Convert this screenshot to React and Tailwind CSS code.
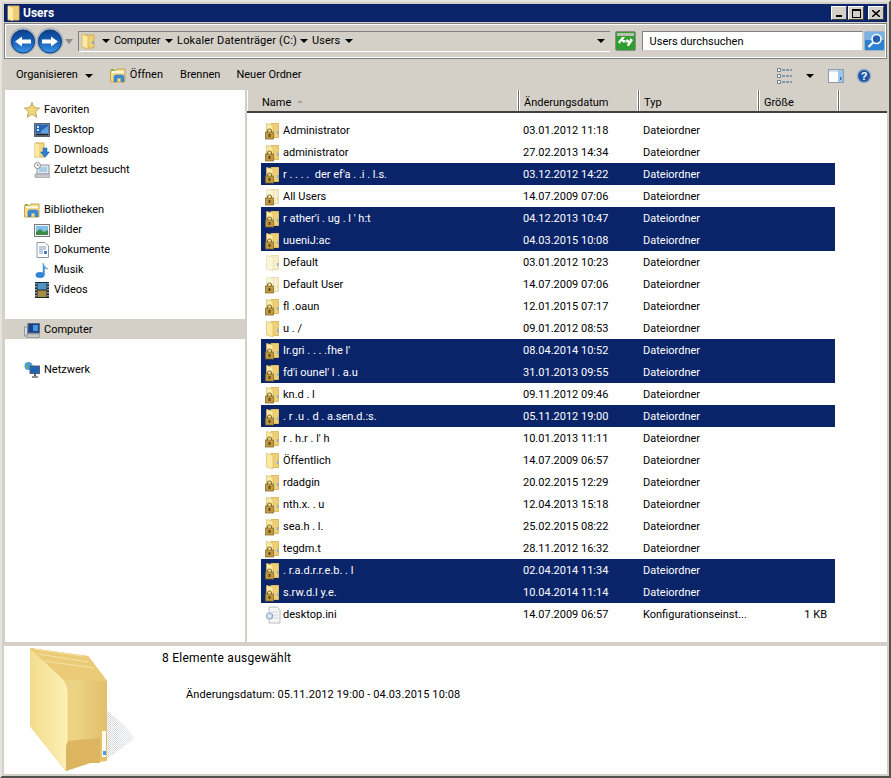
import React from "react";

const rows = [
  { name: "Administrator", date: "03.01.2012 11:18" },
  { name: "administrator", date: "27.02.2013 14:34" },
  { name: "r . . . .  der ef'a . .i . l.s.", date: "03.12.2012 14:22", sel: true },
  { name: "All Users", date: "14.07.2009 07:06", pale: true },
  { name: "r ather'i . ug . l ' h:t", date: "04.12.2013 10:47", sel: true },
  { name: "uueniJ:ac", date: "04.03.2015 10:08", sel: true },
  { name: "Default", date: "03.01.2012 10:23", pale: true, open: true },
  { name: "Default User", date: "14.07.2009 07:06", pale: true },
  { name: "fl .oaun", date: "12.01.2015 07:17" },
  { name: "u . /", date: "09.01.2012 08:53", open: true },
  { name: "Ir.gri . . . .fhe l'", date: "08.04.2014 10:52", sel: true },
  { name: "fd'i ounel' l . a.u", date: "31.01.2013 09:55", sel: true },
  { name: "kn.d . l", date: "09.11.2012 09:46" },
  { name: ". r .u . d . a.sen.d.:s.", date: "05.11.2012 19:00", sel: true },
  { name: "r . h.r . l' h", date: "10.01.2013 11:11" },
  { name: "Öffentlich", date: "14.07.2009 06:57", open: true },
  { name: "rdadgin", date: "20.02.2015 12:29" },
  { name: "nth.x. . u", date: "12.04.2013 15:18" },
  { name: "sea.h . l.", date: "25.02.2015 08:22" },
  { name: "tegdm.t", date: "28.11.2012 16:32" },
  { name: ". r.a.d.r.r.e.b. . l", date: "02.04.2014 11:34", sel: true },
  { name: "s.rw.d.l y.e.", date: "10.04.2014 11:14", sel: true },
];

const Folder = ({ lock, pale, open }) => (
  <svg width="18" height="18" viewBox="0 0 18 18" className="shrink-0">
    <path d="M6 1.5 H13.5 V15.5 H6 Z" fill={pale ? "#f5eec8" : "#efcf76"} stroke={pale ? "#e6dcae" : "#dcbb64"} />
    <path d="M1.5 1.5 L8 3 V17 L1.5 15 Z" fill={pale ? "#fbf6d8" : "#fbe9a4"} stroke={pale ? "#e8dfb4" : "#dcbb64"} strokeWidth="0.7" />
    <rect x="12" y="9" width="1.5" height="3" fill={open || !pale ? "#7fb3dc" : "#e6dcae"} />
    {lock && (
      <g>
        <path d="M2.5 10 V9 a2 2 0 0 1 4 0 V10" fill="none" stroke="#8a6d2a" strokeWidth="1.2" />
        <rect x="0.5" y="10" width="8" height="7" fill="#c09a42" stroke="#7d6326" strokeWidth="0.7" />
        <rect x="3.5" y="12" width="2" height="3" fill="#5e4b1f" />
      </g>
    )}
  </svg>
);

const IniIcon = () => (
  <svg width="18" height="18" viewBox="0 0 18 18" className="shrink-0">
    <path d="M4 1 H12 L15 4 V17 H4 Z" fill="#f4f6f8" stroke="#b8bec4" />
    <path d="M6 6 H13 M6 9 H13 M6 12 H13" stroke="#cfd6dc" />
    <circle cx="4.5" cy="10" r="3" fill="#dce6f0" stroke="#8fa9c8" strokeWidth="1.2" />
  </svg>
);

const FolderSmall = () => (
  <svg width="16" height="18" viewBox="0 0 16 18">
    <path d="M4 3 H14 V16 H4 Z" fill="#f0cf75" stroke="#cfa94f" />
    <path d="M2 2 L8 4 V17 L2 15 Z" fill="#fbe9a4" stroke="#d7b45c" strokeWidth="0.8" />
    <rect x="12" y="9" width="1.5" height="3" fill="#6ea8d8" />
  </svg>
);

const LibraryIcon = () => (
  <svg width="16" height="15" viewBox="0 0 16 15">
    <path d="M0.5 2.5 H6 L7 1 H15 V14 H0.5 Z" fill="#f5db8c" stroke="#c8a54e" />
    <rect x="2" y="3" width="12" height="2" fill="#fff8dc" />
    <rect x="1" y="1" width="3" height="1.2" fill="#5fb648" />
    <path d="M4 13.5 V9 Q4 7 6 7 H12 Q14 7 14 9 V13.5 H11 V10 H7 V13.5 Z" fill="#3f8fd6" stroke="#1f6bb0" strokeWidth="0.6" />
  </svg>
);

const Star = () => (
  <svg width="16" height="16" viewBox="0 0 16 16">
    <path d="M8 0.5 L10.2 5.6 L15.6 6.1 L11.5 9.7 L12.8 15.2 L8 12.3 L3.2 15.2 L4.5 9.7 L0.4 6.1 L5.8 5.6 Z" fill="#f2d679" stroke="#b39543" strokeWidth="0.8" />
  </svg>
);

const DesktopIcon = () => (
  <svg width="16" height="14" viewBox="0 0 16 14">
    <rect x="0.5" y="0.5" width="15" height="13" fill="#8a98a8" stroke="#56616e" />
    <rect x="1.5" y="1.5" width="13" height="9" fill="#2a63b4" />
    <path d="M3 3 h2 v2 h-2 Z M3 6 h2 v2 h-2 Z" fill="#cfe4f6" />
    <path d="M7 8 L14 3 V10 H7 Z" fill="#5da0e0" />
    <rect x="1.5" y="11" width="13" height="1.5" fill="#222" />
  </svg>
);

const DownloadsIcon = () => (
  <svg width="16" height="16" viewBox="0 0 16 16">
    <path d="M1 1 H10 V15 H1 Z" fill="#f3d67e" stroke="#d0ad55" />
    <path d="M1 1 L5 3 V15.5 L1 14 Z" fill="#fbe9a4" />
    <path d="M9 6 H13 V10 H15.5 L11 15.5 L6.5 10 H9 Z" fill="#2f7fd0" stroke="#1e62a8" strokeWidth="0.5" />
  </svg>
);

const RecentIcon = () => (
  <svg width="16" height="16" viewBox="0 0 16 16">
    <rect x="3" y="3" width="12" height="9" fill="#e4e8ec" stroke="#8e969e" />
    <rect x="5" y="5" width="8" height="5" fill="#a8cdea" />
    <rect x="1" y="12" width="15" height="3.5" fill="#c4c8cc" stroke="#8e969e" strokeWidth="0.6" />
    <circle cx="3.5" cy="3.5" r="3" fill="#fff" stroke="#808890" />
    <path d="M3.5 2 V3.5 H5" fill="none" stroke="#555" strokeWidth="0.7" />
  </svg>
);

const PicturesIcon = () => (
  <svg width="16" height="13" viewBox="0 0 16 13">
    <rect x="0.5" y="0.5" width="15" height="12" fill="#f2f2f2" stroke="#74797e" />
    <rect x="2" y="2" width="12" height="9" fill="#7fc0ea" />
    <path d="M2 11 V8 L6 5 L10 8 L14 6 V11 Z" fill="#3d8a4a" />
  </svg>
);

const DocIcon = () => (
  <svg width="13" height="16" viewBox="0 0 13 16">
    <path d="M1 0.5 H9 L12.5 4 V15.5 H1 Z" fill="#fff" stroke="#8d99a8" />
    <path d="M3 5 H10 M3 7 H10 M3 9 H7 M3 11 H7" stroke="#7c9cc0" />
    <rect x="8" y="9" width="3" height="3" fill="#3f7fc0" />
  </svg>
);

const MusicIcon = () => (
  <svg width="14" height="16" viewBox="0 0 14 16">
    <ellipse cx="5" cy="13" rx="4.5" ry="3" fill="#2f86d6" />
    <path d="M8 13 V1 Q9 5 13 7 Q11 7 9.5 6 V13 Z" fill="#4a9be2" stroke="#2a75bc" strokeWidth="0.4" />
  </svg>
);

const VideoIcon = () => (
  <svg width="14" height="16" viewBox="0 0 14 16">
    <rect x="0" y="0" width="14" height="16" fill="#1c2a33" />
    <rect x="2.5" y="1" width="9" height="6.5" fill="#4e94c6" />
    <rect x="2.5" y="8.5" width="9" height="6.5" fill="#a98a46" />
    <path d="M1 1 v1.5 M1 4 v1.5 M1 7 v1.5 M1 10 v1.5 M1 13 v1.5 M13 1 v1.5 M13 4 v1.5 M13 7 v1.5 M13 10 v1.5 M13 13 v1.5" stroke="#fff" />
  </svg>
);

const ComputerIcon = () => (
  <svg width="16" height="15" viewBox="0 0 16 15">
    <rect x="0.5" y="4" width="3" height="9" fill="#d9dcdf" stroke="#7a7f84" strokeWidth="0.7" />
    <rect x="4" y="0.5" width="11.5" height="9.5" fill="#16418e" stroke="#5c6a7c" />
    <path d="M9 2 H14 V8 H9 Z" fill="#4a94dc" />
    <rect x="3" y="11" width="12.5" height="3.5" fill="#c4c8cc" stroke="#7a7f84" strokeWidth="0.6" />
  </svg>
);

const NetworkIcon = () => (
  <svg width="16" height="16" viewBox="0 0 16 16">
    <circle cx="4.5" cy="4" r="4" fill="#4a9fd6" />
    <path d="M2 2 Q4 3 4 5 Q3 7 2 6 Z" fill="#5cb84a" />
    <rect x="6" y="4" width="9.5" height="7.5" fill="#1f62b8" stroke="#56616e" />
    <rect x="10" y="11.5" width="2" height="2.5" fill="#56616e" />
    <path d="M8 15 H14" stroke="#3d4650" strokeWidth="1.2" />
  </svg>
);

const NavButton = ({ flip }) => (
  <svg width="28" height="28" viewBox="0 0 28 28" className="shrink-0">
    <defs>
      <linearGradient id="navBlue" x1="0" y1="0" x2="0" y2="1">
        <stop offset="0" stopColor="#0d3f8e" />
        <stop offset="0.45" stopColor="#125bb4" />
        <stop offset="1" stopColor="#3c97ea" />
      </linearGradient>
    </defs>
    <circle cx="14" cy="14" r="13.5" fill="#a9b1ba" />
    <circle cx="14" cy="14.5" r="11.5" fill="url(#navBlue)" stroke="#0d3a7c" />
    <g transform={flip ? "matrix(-1 0 0 1 28 0)" : undefined}>
      <path d="M6 14.5 L13 9.5 V12.5 H22 V16.5 H13 V19.5 Z" fill="#fff" />
    </g>
  </svg>
);

const Caret = ({ className = "" }) => (
  <span className={`inline-block w-0 h-0 border-x-[4px] border-x-transparent border-t-[4px] border-t-black ${className}`} />
);

const RefreshButton = () => (
  <svg width="21" height="20" viewBox="0 0 21 20" className="shrink-0">
    <rect x="0.5" y="0.5" width="20" height="19" rx="1.5" fill="#2f9e2f" stroke="#8a8f88" />
    <rect x="2" y="2" width="17" height="3" fill="#bcbcb0" />
    <path d="M3 11 L7 6 L10 6 L8 9 L11 9 L9 12 L6 10 L5 13 Z" fill="#fff" />
    <path d="M18 9 L14 15 L12 15 L13 11 L10 12 L12 8 L15 10 L15 7 Z" fill="#fff" />
  </svg>
);

const SearchButton = () => (
  <svg width="21" height="20" viewBox="0 0 21 20" className="shrink-0">
    <rect x="0.5" y="0.5" width="20" height="19" rx="1.5" fill="#2d7fd0" stroke="#9eb4cc" />
    <rect x="1" y="1" width="19" height="8" fill="#78b2e6" />
    <circle cx="12.5" cy="8" r="4.5" fill="#2360b0" stroke="#fff" strokeWidth="1.6" />
    <path d="M9 11.5 L4.5 16" stroke="#fff" strokeWidth="2.2" />
  </svg>
);

const ViewsIcon = () => (
  <svg width="16" height="16" viewBox="0 0 16 16">
    <path d="M0.5 0.5 h3 v3 h-3 Z M0.5 6.5 h3 v3 h-3 Z M0.5 12.5 h3 v3 h-3 Z" fill="#fff" stroke="#6f7d8e" />
    <path d="M5 2 H15 M5 8 H15 M5 14 H15" stroke="#3c5a84" strokeDasharray="3 1" />
  </svg>
);

const PaneIcon = () => (
  <svg width="16" height="14" viewBox="0 0 16 14">
    <rect x="0.5" y="0.5" width="15" height="13" fill="#fff" stroke="#8e9cab" />
    <rect x="1" y="1" width="9" height="2" fill="#d7dee6" />
    <rect x="10" y="1" width="5" height="12" fill="#9cc6ea" />
    <rect x="12" y="8" width="1.5" height="3" fill="#2e6fb4" />
  </svg>
);

const HelpIcon = () => (
  <svg width="16" height="16" viewBox="0 0 16 16">
    <circle cx="8" cy="8" r="7.5" fill="#a9b4c0" />
    <circle cx="8" cy="8" r="6" fill="#1e57a8" />
    <text x="8" y="12" textAnchor="middle" fontSize="11" fontWeight="700" fill="#fff" fontFamily="Liberation Sans, sans-serif">?</text>
  </svg>
);

const TitleFolder = () => (
  <svg width="14" height="16" viewBox="0 0 14 16">
    <path d="M1 1 H12 V15 H1 Z" fill="#efcf76" stroke="#d9b65e" />
    <path d="M1 1 L6 3 V16 L1 14 Z" fill="#fcebaa" />
  </svg>
);

const BigFolder = () => (
  <svg width="106" height="126" viewBox="0 0 106 126" className="shrink-0">
    <defs>
      <linearGradient id="bigSide" x1="0" y1="0" x2="1" y2="0">
        <stop offset="0" stopColor="#e8c672" />
        <stop offset="0.6" stopColor="#ecd384" />
        <stop offset="1" stopColor="#e2bf6a" />
      </linearGradient>
      <linearGradient id="bigFront" x1="0" y1="0" x2="1" y2="0">
        <stop offset="0" stopColor="#f3dc8f" />
        <stop offset="1" stopColor="#fdf1b4" />
      </linearGradient>
      <pattern id="bigDither" width="2" height="2" patternUnits="userSpaceOnUse">
        <rect width="1" height="1" fill="#8e9096" />
        <rect x="1" y="1" width="1" height="1" fill="#a7a9ae" />
      </pattern>
      <linearGradient id="bigShadowFade" x1="0" y1="0" x2="1" y2="0">
        <stop offset="0" stopColor="#fff" />
        <stop offset="1" stopColor="#fff" stopOpacity="0.25" />
      </linearGradient>
      <mask id="bigShadowMask">
        <rect width="106" height="126" fill="url(#bigShadowFade)" />
      </mask>
    </defs>
    <path d="M76 64 Q92 76 105 92 L78 112 L54 116 L38 124 Z" fill="url(#bigDither)" mask="url(#bigShadowMask)" />
    <path d="M0 2 L58 10 L77 35 V115 L60 117 L36 125 V56 Z" fill="url(#bigSide)" />
    <path d="M0 2 L34 34 Q38 40 38 48 V94 L36 125 L0 80 Z" fill="url(#bigFront)" stroke="#e6c877" strokeWidth="0.5" />
    <path d="M0 2 L58 10 L77 35 L34 34 Z" fill="#eccb78" />
    <path d="M4 3 L52 10 M8 8 L58 16 M14 15 L64 22" stroke="#f6e3a6" />
    <path d="M36 100 L38 95 L70 92 V117 L60 117 L36 125 Z" fill="#ddb45f" />
    <rect x="72" y="85" width="4" height="26" fill="#fffdf0" />
    <rect x="73" y="105" width="3" height="4" fill="#4a9ae0" />
  </svg>
);

const NavItem = ({ icon, label, indent, active }) => (
  <div className={`flex items-center h-5 pt-[2px] ${indent ? "pl-[29px]" : "pl-[19px]"} ${active ? "bg-[#d4d0c8]" : ""}`}>
    <span className="w-4 h-4 flex items-center justify-center shrink-0">{icon}</span>
    <span className="ml-1">{label}</span>
  </div>
);

const Crumb = ({ label, className = "" }) => (
  <>
    <Caret className="mx-[4px]" />
    <span className={`mr-[1px] ${className}`}>{label}</span>
  </>
);

const Col = ({ w, children, sort }) => (
  <div className={`${w} h-full flex items-center border-r border-r-[#6f6c66] shadow-[inset_-1px_0_0_#fff,inset_1px_0_0_#fff] pl-[5px] pt-[5px] relative`}>
    {children}
    {sort && <span className="ml-[6px] mb-[3px] w-0 h-0 border-x-[3px] border-x-transparent border-b-[3px] border-b-[#a8a49c]" />}
  </div>
);

const Row = ({ row }) => (
  <div className={`flex items-center h-[22px] w-[574px] ml-[14px] pt-[2px] ${row.sel ? "bg-[#0a246a] text-white" : ""}`}>
    <span className="w-[22px] pl-[4px] shrink-0 flex">
      {row.icon || <Folder lock={!row.open} pale={row.pale} open={row.open} />}
    </span>
    <span className="w-[240px] shrink-0 whitespace-pre">{row.name}</span>
    <span className="w-[120px] shrink-0">{row.date}</span>
    <span className="w-[110px] shrink-0 whitespace-nowrap">{row.type || "Dateiordner"}</span>
    <span className="w-[78px] shrink-0 pr-[4px] text-right whitespace-nowrap">{row.size}</span>
  </div>
);

export default function App() {
  return (
    <div
      className="w-[891px] h-[778px] bg-[#d4d0c8] border-2 border-t-[#e6e4df] border-l-[#e6e4df] border-r-[#55534f] border-b-[#55534f] p-[2px] flex flex-col overflow-hidden text-[11px] text-black"
      style={{ fontFamily: 'Roboto, "Noto Sans", sans-serif' }}
    >
      <div className="h-[18px] bg-[#0a246a] flex items-center pl-[3px] pr-[4px] shrink-0">
        <TitleFolder />
        <span className="ml-[2px] text-white font-bold text-[12px]">Users</span>
        <div className="ml-auto flex gap-[1px] mr-[-1px]">
          <button className="w-4 h-[14px] bg-[#d4d0c8] border border-t-white border-l-white border-r-[#404040] border-b-[#404040] flex items-end justify-center pb-[2px]">
            <span className="w-[6px] h-[2px] bg-black" />
          </button>
          <button className="w-4 h-[14px] bg-[#d4d0c8] border border-t-white border-l-white border-r-[#404040] border-b-[#404040] flex items-center justify-center">
            <span className="w-[9px] h-[9px] border border-black border-t-2" />
          </button>
          <button className="w-4 h-[14px] ml-[3px] bg-[#d4d0c8] border border-t-white border-l-white border-r-[#404040] border-b-[#404040] flex items-center justify-center">
            <svg width="8" height="7" viewBox="0 0 8 7"><path d="M0 0 L8 7 M8 0 L0 7" stroke="#000" strokeWidth="1.5" /></svg>
          </button>
        </div>
      </div>

      <div className="h-[36px] mt-px shrink-0 border border-[#808080] shadow-[inset_1px_1px_0_#fff,inset_-1px_-1px_0_#fff] flex items-center pl-[4px] pr-[1px]">
        <NavButton />
        <span className="ml-[-1px]"><NavButton flip /></span>
        <span className="w-0 h-0 ml-[1px] border-x-[4px] border-x-transparent border-t-[5px] border-t-[#8b8b8b]" />
        <div className="ml-[5px] h-[21px] w-[533px] border-l border-t border-l-[#808080] border-t-[#808080] border-b border-b-white flex items-center pl-[1px]">
          <FolderSmall />
          <span className="ml-[2px] flex items-center"><Crumb label="Computer" className="tracking-[-0.3px]" /></span>
          <Crumb label="Lokaler Datenträger (C:)" className="tracking-[0.15px]" />
          <span className="ml-[-2px] flex items-center"><Crumb label="Users" /></span>
          <Caret className="mx-[4px]" />
          <Caret className="ml-auto mr-[5px]" />
        </div>
        <span className="ml-[5px]"><RefreshButton /></span>
        <div className="ml-[6px] w-[222px] h-[20px] pt-[2px] bg-white border border-t-[#808080] border-l-[#808080] border-r-[#d4d0c8] border-b-[#d4d0c8] flex items-center pl-[7px]">
          Users durchsuchen
        </div>
        <span className="ml-px"><SearchButton /></span>
      </div>

      <div className="h-[31px] shrink-0 flex items-center pt-[2px] pl-3 pr-[15px]">
        <span>Organisieren</span>
        <Caret className="ml-[7px]" />
        <span className="ml-[17px]"><LibraryIcon /></span>
        <span className="ml-1">Öffnen</span>
        <span className="ml-[17px]">Brennen</span>
        <span className="ml-4">Neuer Ordner</span>
        <div className="ml-auto flex items-center">
          <ViewsIcon />
          <Caret className="ml-[13px]" />
          <span className="ml-[14px] flex"><PaneIcon /></span>
          <span className="ml-[12px] flex"><HelpIcon /></span>
        </div>
      </div>

      <div className="flex-1 flex min-h-0">
        <div className="w-[240px] ml-px bg-white pt-[9px] shrink-0">
          <NavItem icon={<Star />} label="Favoriten" />
          <NavItem indent icon={<DesktopIcon />} label="Desktop" />
          <NavItem indent icon={<DownloadsIcon />} label="Downloads" />
          <NavItem indent icon={<RecentIcon />} label="Zuletzt besucht" />
          <div className="h-5" />
          <NavItem icon={<LibraryIcon />} label="Bibliotheken" />
          <NavItem indent icon={<PicturesIcon />} label="Bilder" />
          <NavItem indent icon={<DocIcon />} label="Dokumente" />
          <NavItem indent icon={<MusicIcon />} label="Musik" />
          <NavItem indent icon={<VideoIcon />} label="Videos" />
          <div className="h-5" />
          <NavItem active icon={<ComputerIcon />} label="Computer" />
          <div className="h-5" />
          <NavItem icon={<NetworkIcon />} label="Netzwerk" />
        </div>

        <div className="w-[640px] ml-[2px] bg-white flex flex-col">
          <div className="h-[23px] flex bg-[#d4d0c8] border-b-2 border-b-[#404040] shrink-0">
            <Col w="w-[272px] pl-[15px]" sort>Name</Col>
            <Col w="w-[120px]">Änderungsdatum</Col>
            <Col w="w-[120px]">Typ</Col>
            <Col w="w-[80px]">Größe</Col>
            <div className="flex-1 shadow-[inset_1px_0_0_#fff]" />
          </div>
          <div className="pt-[6px]">
            {rows.map((row, i) => (
              <Row key={i} row={row} />
            ))}
            <Row
              row={{
                name: "desktop.ini",
                date: "14.07.2009 06:57",
                type: "Konfigurationseinst...",
                size: "1 KB",
                icon: <IniIcon />,
              }}
            />
          </div>
        </div>
      </div>

      <div className="h-[128px] mt-[4px] bg-white flex shrink-0">
        <span className="ml-[26px]"><BigFolder /></span>
        <div className="ml-[26px] pt-[3px]">
          <div className="text-[12px] tracking-[0.25px]">8 Elemente ausgewählt</div>
          <div className="ml-[24px] mt-[20px] tracking-[0.1px]">Änderungsdatum: 05.11.2012 19:00 - 04.03.2015 10:08</div>
        </div>
      </div>
    </div>
  );
}
